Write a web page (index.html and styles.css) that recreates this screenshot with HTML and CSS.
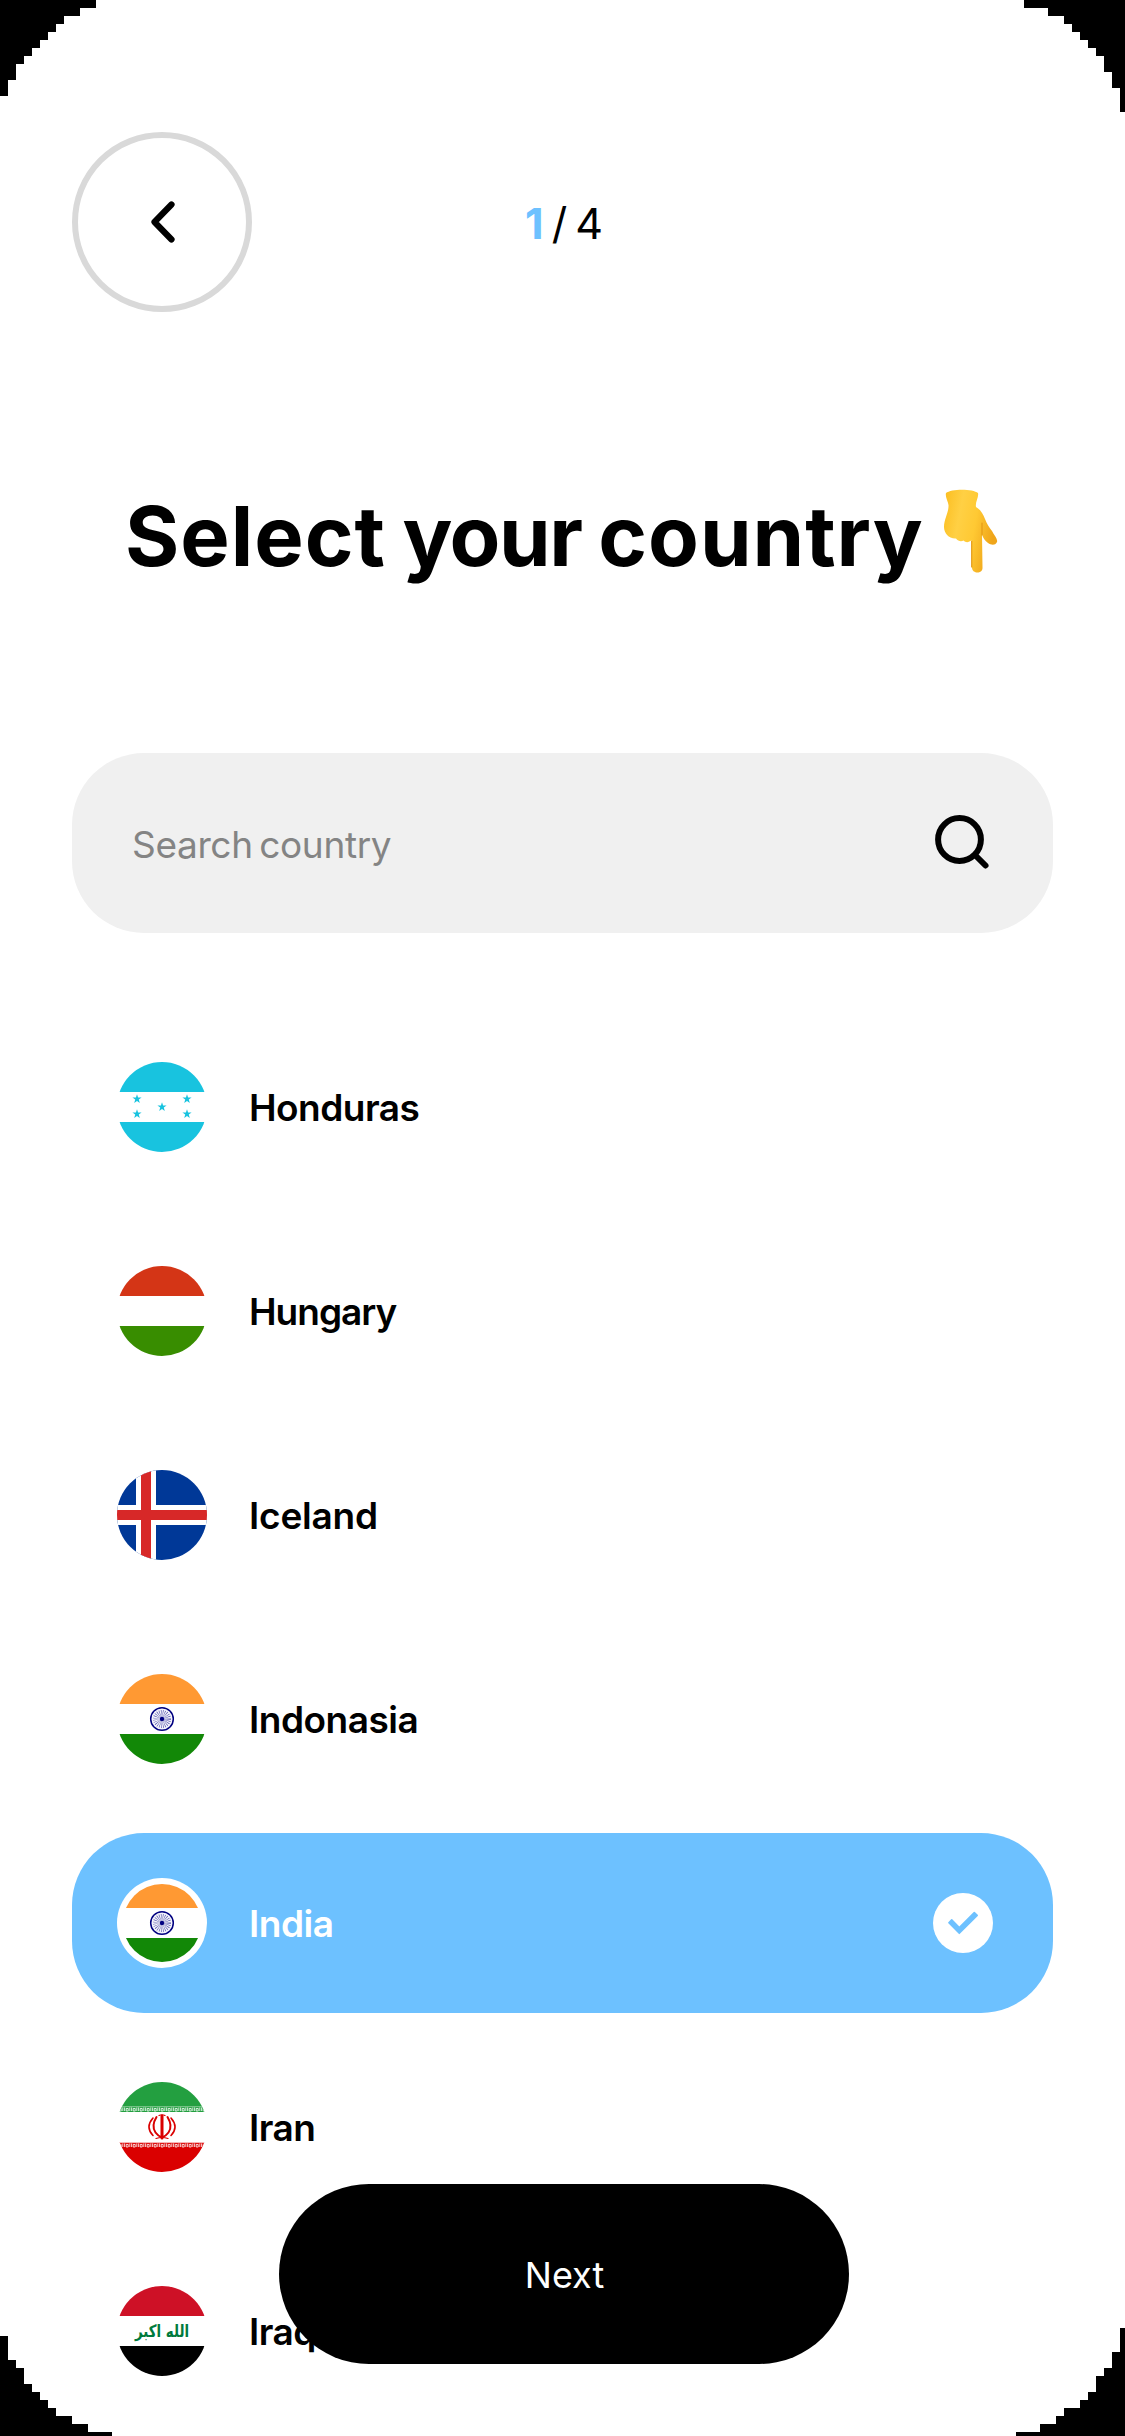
FILE: index.html
```html
<!DOCTYPE html>
<html lang="en">
<head>
<meta charset="utf-8">
<title>Select your country</title>
<link rel="stylesheet" href="styles.css">
</head>
<body>
<svg width="0" height="0" class="defs" aria-hidden="true">
  <defs>
    <clipPath id="round"><circle cx="45" cy="45" r="45"/></clipPath>
    <clipPath id="inner"><circle cx="45" cy="45" r="39"/></clipPath>
    <path id="star" d="M0-4.8 1.1-1.5H4.6L1.8.6 2.8 3.9 0 1.9-2.8 3.9-1.8.6-4.6-1.5H-1.1Z"/>
    <g id="chakra">
      <circle cx="45" cy="45" r="11.3" fill="#f3f3fb" stroke="#000080" stroke-width="1.5"/>
      <circle cx="45" cy="45" r="4.5" fill="none" stroke="#000080" stroke-width="9" stroke-dasharray=".35 .828" opacity=".7"/>
      <circle cx="45" cy="45" r="2.2" fill="#000080"/>
    </g>
    <pattern id="kufic" width="7" height="6" patternUnits="userSpaceOnUse">
      <path d="M0 .6H7M.6 1.5V5M2.2 2.5H4.2V5H2.2ZM5.8 1.5V5" fill="none" stroke="#fff" stroke-width=".8"/>
    </pattern>
  </defs>
</svg>
<main class="screen">
  <header class="topbar">
    <button class="back" aria-label="Back">
      <svg width="30" height="50" viewBox="0 0 30 50"><path d="M24.500 7.500 7.500 25 24.500 42.500" fill="none" stroke="#000" stroke-width="6.200" stroke-linecap="round" stroke-linejoin="round"/></svg>
    </button>
    <p class="steps"><b class="current">1</b><span class="slash">/</span><span>4</span></p>
  </header>
  <h1 class="title"><span class="title-text"><span class="wide">Select</span> your <span class="wide">country</span></span>
    <svg class="hand" width="56" height="86" viewBox="0 0 56 86">
      <defs><linearGradient id="skin" x1="0" x2="1" y1="0" y2=".3"><stop offset="0" stop-color="#fbbd1f"/><stop offset=".35" stop-color="#ffd044"/><stop offset=".65" stop-color="#ffc933"/><stop offset="1" stop-color="#efa51a"/></linearGradient></defs>
      <path d="M2 5C7 .5 29 .5 34 5C35 9 31 14 32 19C37 22 39 26 41 31C43 36 45 39 48 43C50 47 54 51 53 54C51 58 47 57 44 55C41 53 39 50 38 46.500L38.500 80C38.500 86 28.500 86 28 80L27.500 52C25 54.500 22 55 19.500 52.500C17 54 14 53 12 50.500C5 51 0 45 0 39C0 31 5 24 4.500 17C4 13 1 9 2 5Z" fill="url(#skin)"/>
      <path d="M38 35V47M27.700 53V79" fill="none" stroke="#e59a17" stroke-width="1.200" stroke-linecap="round"/>
    </svg>
  </h1>
  <label class="search">
    <span class="placeholder">Search country</span>
    <svg width="60" height="60" viewBox="0 0 60 60" fill="none" stroke="#000" stroke-width="6" stroke-linecap="round"><circle cx="26.500" cy="26.500" r="21.400"/><path d="M43.500 43.500 52.500 52.500"/></svg>
  </label>
  <ul class="list">
    <li class="row">
      <svg class="flag" viewBox="0 0 90 90"><g clip-path="url(#round)"><path fill="#fff" d="M0 0H90V90H0Z"/><path fill="#18c3df" d="M0 0H90V30H0ZM0 60H90V90H0Z"/></g><g fill="#18c3df"><use href="#star" x="20" y="37"/><use href="#star" x="70" y="37"/><use href="#star" x="45" y="45"/><use href="#star" x="20" y="52"/><use href="#star" x="70" y="52"/></g></svg>
      <span class="name honduras">Honduras</span>
    </li>
    <li class="row">
      <svg class="flag" viewBox="0 0 90 90"><g clip-path="url(#round)"><path fill="#d43516" d="M0 0H90V30H0Z"/><path fill="#388d00" d="M0 60H90V90H0Z"/></g></svg>
      <span class="name hungary">Hungary</span>
    </li>
    <li class="row">
      <svg class="flag" viewBox="0 0 90 90"><g clip-path="url(#round)"><path fill="#003897" d="M0 0H90V90H0Z"/><path fill="#fff" d="M19 0H39V90H19ZM0 35H90V55H0Z"/><path fill="#d72828" d="M24 0H34V90H24ZM0 40H90V50H0Z"/></g></svg>
      <span class="name iceland">Iceland</span>
    </li>
    <li class="row">
      <svg class="flag" viewBox="0 0 90 90"><g clip-path="url(#round)"><path fill="#ff9933" d="M0 0H90V30H0Z"/><path fill="#128807" d="M0 60H90V90H0Z"/></g><use href="#chakra"/></svg>
      <span class="name indonasia">Indonasia</span>
    </li>
    <li class="row selected">
      <svg class="flag" viewBox="0 0 90 90"><circle cx="45" cy="45" r="45" fill="#fff"/><g clip-path="url(#inner)"><path fill="#ff9933" d="M0 0H90V30H0Z"/><path fill="#128807" d="M0 60H90V90H0Z"/></g><use href="#chakra"/></svg>
      <span class="name india">India</span>
      <svg class="check" width="60" height="60" viewBox="0 0 60 60"><circle cx="30" cy="30" r="30" fill="#fff"/><path fill="#6dc1ff" stroke="#6dc1ff" stroke-width="1.600" stroke-linejoin="round" d="M15.900 29.700 18.700 26.900 26.300 34.500 41.300 19.600 44.200 22.400 26.300 40.300Z"/></svg>
    </li>
    <li class="row">
      <svg class="flag" viewBox="0 0 90 90"><g clip-path="url(#round)"><path fill="#239f40" d="M0 0H90V30H0Z"/><path fill="#da0000" d="M0 60H90V90H0Z"/><path fill="url(#kufic)" d="M0 24.500H90V30.500H0ZM0 60H90V66H0Z"/></g>
        <g fill="none" stroke="#da0000" stroke-linecap="round"><path d="M45 34V56" stroke-width="3"/><path d="M42 33.500Q45 32 48 33.500M39 56.500Q45 54.500 51 56.500" stroke-width="1.200"/><path d="M39.500 35Q34 44 38.500 50.500Q41 54 45 55.500Q49 54 51.500 50.500Q56 44 50.500 35" stroke-width="2"/><path d="M36 36Q28 45 36 53.500M54 36Q62 45 54 53.500" stroke-width="1.600"/></g></svg>
      <span class="name iran">Iran</span>
    </li>
    <li class="row">
      <svg class="flag" viewBox="0 0 90 90"><g clip-path="url(#round)"><path fill="#ce1126" d="M0 0H90V30H0Z"/><path d="M0 60H90V90H0Z"/></g><text class="takbir" x="45" y="50.500" text-anchor="middle" textLength="54" lengthAdjust="spacingAndGlyphs">الله اكبر</text></svg>
      <span class="name iraq">Iraq</span>
    </li>
  </ul>
  <button class="next"><span>Next</span></button>
  <svg class="corners" width="1125" height="2436" viewBox="0 0 1125 2436" shape-rendering="crispEdges" aria-hidden="true">
    <path d="M0 0H96V8H80V16H64V24H56V32H48V40H40V48H32V56H24V64H16V80H8V96H0Z"/>
    <path d="M1125 0H1024V8H1048V16H1064V24H1072V32H1080V40H1088V48H1096V56H1104V72H1112V88H1120V112H1125Z"/>
    <path d="M0 2336H8V2360H16V2368H24V2384H32V2392H40V2400H48V2408H56V2416H72V2424H88V2432H112V2436H0Z"/>
    <path d="M1125 2328H1120V2352H1112V2368H1104V2376H1096V2392H1088V2400H1080V2408H1064V2416H1056V2424H1040V2432H1016V2436H1125Z"/>
  </svg>
</main>
</body>
</html>
```
FILE: styles.css
```css
* { box-sizing: border-box; margin: 0; padding: 0; }
body { background: #fff; color: #000; font-family: "Inter", "Liberation Sans", sans-serif; }
button { font: inherit; border: 0; background: none; }
.defs { display: block; position: absolute; }
.screen {
  position: relative;
  width: 1125px;
  height: 2436px;
  padding: 132px 72px 0;
  overflow: hidden;
  background: #fff;
}
.topbar { display: grid; grid-template-columns: 180px 1fr 180px; align-items: center; height: 180px; }
.back {
  display: flex; align-items: center; justify-content: center;
  width: 180px; height: 180px;
  border: 6px solid #d9d9d9; border-radius: 50%;
}
.back svg { display: block; }
.steps { display: flex; justify-content: center; font-size: 43px; line-height: 52px; padding: 2px 0 0 3px; }
.current { color: #6dc1ff; font-weight: 700; }
.slash { margin: 0 8px; }
.title {
  display: flex; justify-content: space-between; align-items: flex-start;
  height: 110px; margin-top: 169px; padding: 0 53px;
  font-size: 83px; font-weight: 700; line-height: 110px;
}
.title-text { white-space: nowrap; letter-spacing: -1.5px; word-spacing: -1.5px; }
.wide { letter-spacing: 1px; }
.hand { flex: none; margin-top: 7px; }
.search {
  display: flex; align-items: center; justify-content: space-between;
  height: 180px; margin-top: 162px; padding: 0 60px;
  border-radius: 72px; background: #f0f0f0;
}
.placeholder { padding-top: 3px; color: #848484; font-size: 37px; line-height: 50px; letter-spacing: -0.35px; word-spacing: -3.5px; }
.list { display: flex; flex-direction: column; gap: 24px; margin-top: 84px; list-style: none; }
.row { display: flex; align-items: center; height: 180px; padding: 0 60px 0 45px; border-radius: 72px; }
.flag { display: block; flex: none; width: 90px; height: 90px; }
.name { flex: 1; margin-left: 42px; padding-top: 1px; font-size: 37px; font-weight: 600; line-height: 50px; letter-spacing: -0.5px; }
.hungary { letter-spacing: -1px; }
.iceland { letter-spacing: -0.2px; }
.selected { background: #6dc1ff; color: #fff; }
.check { flex: none; }
.takbir { fill: #007a3d; font: bold 17px "DejaVu Sans", sans-serif; }
.next {
  position: absolute; left: 279px; top: 2184px;
  display: flex; align-items: center; justify-content: center;
  width: 570px; height: 180px; padding: 2px 0 0 1px; border-radius: 90px;
  background: #000; color: #fff; font-size: 36px;
}
.corners { position: absolute; left: 0; top: 0; pointer-events: none; }
```
